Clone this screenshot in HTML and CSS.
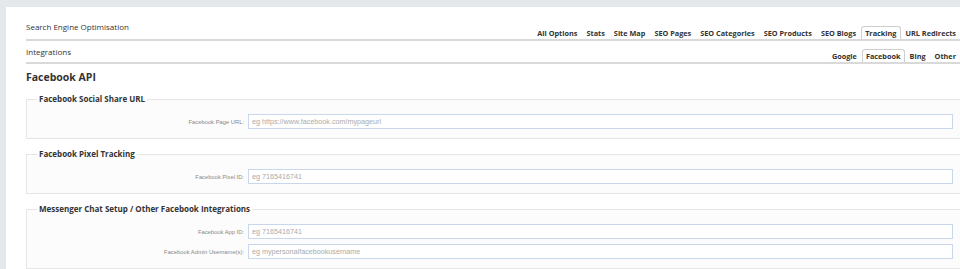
FILE: index.html
```html
<!DOCTYPE html>
<html lang="en">
<head>
    <meta charset="UTF-8">
    <meta name="viewport" content="width=device-width, initial-scale=1.0">
    <title>Search Engine Optimisation - Integrations</title>
    <link rel="stylesheet" href="styles.css">
</head>
<body>
    <div class="panel">
        <div class="page-head top">
            <div class="head-title">Search Engine Optimisation</div>
            <div class="tabs">
                <a class="tab">All Options</a>
                <a class="tab">Stats</a>
                <a class="tab">Site Map</a>
                <a class="tab">SEO Pages</a>
                <a class="tab">SEO Categories</a>
                <a class="tab">SEO Products</a>
                <a class="tab">SEO Blogs</a>
                <a class="tab active">Tracking</a>
                <a class="tab">URL Redirects</a>
            </div>
        </div>
        <div class="page-head sub">
            <div class="head-title">Integrations</div>
            <div class="tabs">
                <a class="tab">Google</a>
                <a class="tab active">Facebook</a>
                <a class="tab">Bing</a>
                <a class="tab">Other</a>
            </div>
        </div>

        <h2 class="section-title">Facebook API</h2>

        <fieldset class="group">
            <legend>Facebook Social Share URL</legend>
            <div class="row">
                <label>Facebook Page URL:</label>
                <input type="text" placeholder="eg https://www.facebook.com/mypageurl">
            </div>
        </fieldset>

        <fieldset class="group">
            <legend>Facebook Pixel Tracking</legend>
            <div class="row">
                <label>Facebook Pixel ID:</label>
                <input type="text" placeholder="eg 7165416741">
            </div>
        </fieldset>

        <fieldset class="group">
            <legend>Messenger Chat Setup / Other Facebook Integrations</legend>
            <div class="row">
                <label>Facebook App ID:</label>
                <input type="text" placeholder="eg 7165416741">
            </div>
            <div class="row">
                <label>Facebook Admin Username(s):</label>
                <input type="text" placeholder="eg mypersonalfacebookusername">
            </div>
        </fieldset>
    </div>
</body>
</html>
```

FILE: styles.css
```css
body{
    margin: 0;
    padding: 7px 0 0 6px;
    background-color: #e5e8ea;
    overflow: hidden;
    font-family: "Open Sans", "Noto Sans", sans-serif;
    color: #333;
}
.panel{
    background-color: #fff;
    padding: 14px 0 20px 20px;
    min-height: 300px;
}
.page-head{
    display: flex;
    justify-content: space-between;
    align-items: flex-end;
    border-bottom: 2px solid #d9d9d9;
}
.head-title{
    font-size: 8px;
    line-height: 12px;
    color: #333;
}
.top .head-title{
    padding-bottom: 6px;
}
.sub .head-title{
    padding: 5px 0 4px;
}
.tabs{
    display: flex;
    gap: 1px;
}
.tab{
    font-size: 7.3px;
    font-weight: 700;
    line-height: 12px;
    padding: 0 3px;
    border: 1px solid transparent;
    border-bottom: none;
    border-radius: 3px 3px 0 0;
    color: #333;
}
.tab.active{
    border-color: #cfcfcf;
    background-color: #fff;
}
.section-title{
    font-size: 10.5px;
    font-weight: 700;
    line-height: 14px;
    margin: 6px 0 9px;
}
.group{
    margin: 0 -30px 9px 0;
    padding: 9px 36px 9px 10px;
    border: 1px solid #e6e6e6;
    background-color: #fcfcfc;
}
.group legend{
    font-size: 8px;
    font-weight: 700;
    line-height: 12px;
    padding: 0 2px;
    color: #333;
}
.row{
    display: grid;
    grid-template-columns: 207px 1fr;
    column-gap: 4px;
    align-items: center;
}
.row + .row{
    margin-top: 5px;
}
.row label{
    font-family: "Liberation Sans", Arial, sans-serif;
    font-size: 5.8px;
    color: #888;
    text-align: right;
}
.row input{
    box-sizing: border-box;
    height: 15px;
    margin: 0;
    padding: 0 3px;
    border: 1px solid #c9d7ec;
    background-color: #fff;
    font-family: "Liberation Sans", Arial, sans-serif;
    font-size: 7.2px;
    color: #555;
    outline: none;
}
.row input::placeholder{
    color: #aaa;
}
```
